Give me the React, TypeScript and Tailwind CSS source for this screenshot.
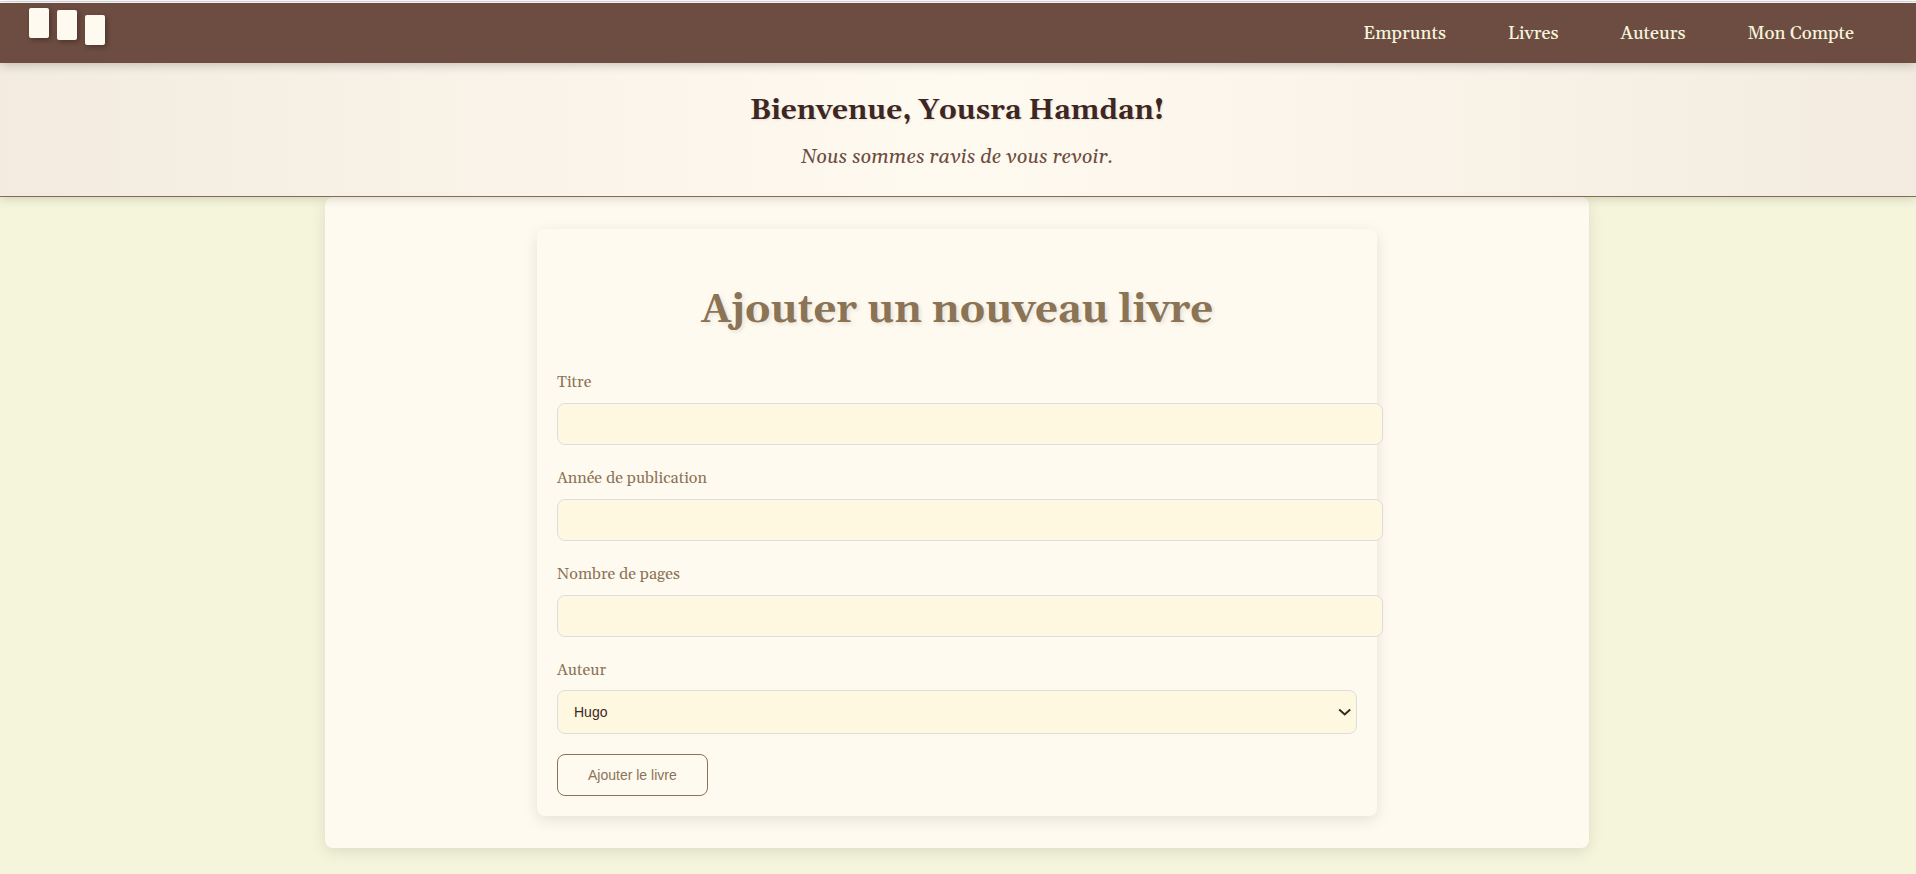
import React from "react";

const navLinks = ["Emprunts", "Livres", "Auteurs", "Mon Compte"];

const fields = [
  { id: "titre", label: "Titre" },
  { id: "annee", label: "Année de publication" },
  { id: "pages", label: "Nombre de pages" },
];

function Logo() {
  return (
    <a href="#" aria-label="Accueil" className="flex h-full items-start gap-2">
      <span className="mt-[5px] h-[30px] w-5 rounded-[2px] bg-[#fffaf0] shadow-[2px_2px_5px_rgba(0,0,0,0.3)]" />
      <span className="mt-[7px] h-[30px] w-5 rounded-[2px] bg-[#fffaf0] shadow-[2px_2px_5px_rgba(0,0,0,0.3)]" />
      <span className="mt-3 h-[30px] w-5 rounded-[2px] bg-[#fffaf0] shadow-[2px_2px_5px_rgba(0,0,0,0.3)]" />
    </a>
  );
}

export default function App() {
  return (
    <div className="min-h-screen bg-[#f5f5dc] font-[Gelasio,Georgia,'Liberation_Serif',serif] text-[#3e2723]">
      <div className="flex h-[3px] flex-col justify-center bg-white">
        <div className="h-px bg-[#dddddd]" />
      </div>
      <nav className="relative z-20 flex h-[60px] items-center justify-between bg-[#6d4c41] pr-[31px] pl-[29px] shadow-[0_2px_10px_rgba(0,0,0,0.2)]">
        <Logo />
        <ul className="flex pt-0.5">
          {navLinks.map((name) => (
            <li key={name}>
              <a href="#" className="block px-[31px] text-[18px] leading-6 font-medium text-[#f5f5dc]">
                {name}
              </a>
            </li>
          ))}
        </ul>
      </nav>
      <header className="relative z-10 flex h-[134px] flex-col items-center border-b border-[#8b6b4f] bg-linear-to-r from-[#f3ebe0] via-[#fffaf0] to-[#f3ebe0] pt-[30px] pr-0.5 text-center shadow-[0_2px_10px_rgba(0,0,0,0.15)]">
        <h2 className="text-[28px] leading-9 font-bold [text-shadow:1px_1px_2px_rgba(0,0,0,0.1)]">
          Bienvenue, Yousra Hamdan!
        </h2>
        <p className="mt-3.5 text-[20px] leading-7 text-[#6d4c41] italic">Nous sommes ravis de vous revoir.</p>
      </header>
      <div className="pr-0.5">
        <main className="mx-auto w-[66%] rounded-lg bg-[#fffaf0] p-8 shadow-[0_4px_15px_rgba(0,0,0,0.1)]">
          <form className="mx-auto max-w-[840px] rounded-lg bg-[#fffaf0] px-5 pb-5 shadow-[0_4px_15px_rgba(0,0,0,0.1)]">
            <h1 className="pt-[57px] pb-[34px] text-center text-[40px] leading-[50px] font-bold text-[#8b7355] [text-shadow:2px_2px_4px_rgba(0,0,0,0.1)]">
              Ajouter un nouveau livre
            </h1>
            {fields.map((f) => (
              <div key={f.id} className="mb-[21px]">
                <label htmlFor={f.id} className="block pb-[9px] text-base leading-6 text-[#8b7355]">
                  {f.label}
                </label>
                <input
                  id={f.id}
                  type="text"
                  className="block h-[42px] w-[calc(100%+26px)] rounded-lg border border-[#dddddd] bg-[#fff8e1] px-3 font-['Liberation_Sans',sans-serif] text-sm"
                />
              </div>
            ))}
            <div className="relative mb-5">
              <label htmlFor="auteur" className="block pb-2 text-base leading-6 text-[#8b7355]">
                Auteur
              </label>
              <select
                id="auteur"
                className="block h-11 w-full appearance-none rounded-lg border border-[#dddddd] bg-[#fff8e1] px-4 font-['Liberation_Sans',sans-serif] text-sm text-[#3e2723]"
              >
                <option>Hugo</option>
              </select>
              <svg
                className="pointer-events-none absolute right-[5px] bottom-[15px] h-3.5 w-3.5"
                viewBox="0 0 14 14"
                fill="none"
                stroke="#3e2723"
                strokeWidth="2"
              >
                <path d="M1.2 4.5 6.7 9.5 12.2 4.5" />
              </svg>
            </div>
            <button
              type="submit"
              className="block h-[42px] rounded-lg border border-[#8b7355] px-[30px] font-['Liberation_Sans',sans-serif] text-sm text-[#8b7355]"
            >
              Ajouter le livre
            </button>
          </form>
        </main>
      </div>
    </div>
  );
}
